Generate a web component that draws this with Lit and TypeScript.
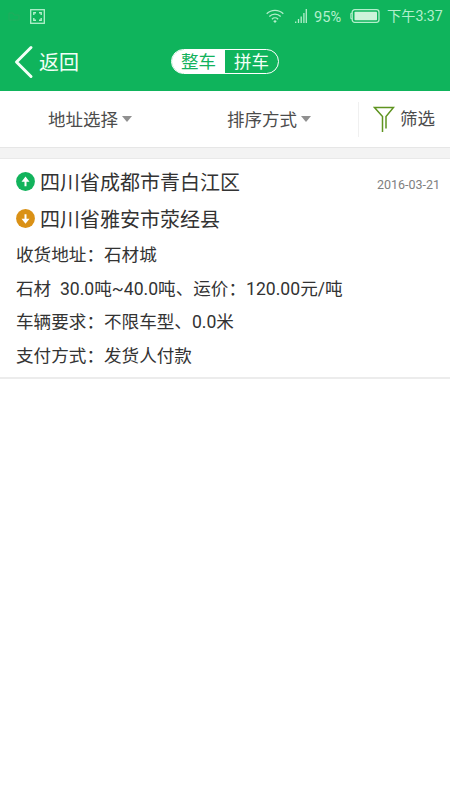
import { LitElement, html, svg, css } from "lit";
import { customElement, property } from "lit/decorators.js";

@customElement("status-bar")
class StatusBar extends LitElement {
  static styles = css`
    :host { display: flex; height: 32px; align-items: center; color: #b4efcc; font-size: 14.2px; line-height: 32px; }
    .faint { margin-left: 8px; }
    .frame { margin-left: 9px; }
    .wifi { margin-left: auto; }
    .signal { margin-left: 11px; }
    .percent { margin: 2px 0 0 7px; width: 28px; font-size: 14.6px; }
    .battery { margin-left: 8px; }
    .time { margin: 0 8px 0 7px; width: 55px; white-space: nowrap; text-align: right; }
    svg { display: block; flex: none; }
  `;
  render() {
    return html`
      <svg class="faint" width="13" height="12" viewBox="0 0 13 12"><path d="M1 3h4l1 2h5v5H1z" fill="none" stroke="#22ab5d" stroke-width="1"/></svg>
      <svg class="frame" width="15" height="15" viewBox="0 0 15 15" fill="none" stroke="currentColor">
        <rect x=".7" y=".7" width="13.6" height="13.6" stroke-width="1.3"/>
        <path d="M3.8 6V3.8H6M9 3.8h2.2V6M11.2 9v2.2H9M6 11.2H3.8V9" stroke-width="1.4"/>
      </svg>
      <svg class="wifi" width="18" height="15" viewBox="0 0 18 15" fill="none" stroke="currentColor" stroke-width="1.3">
        <path d="M.7 4.7a11.8 11.8 0 0 1 16.6 0M3.3 7.5a8 8 0 0 1 11.4 0M5.9 10.2a4.4 4.4 0 0 1 6.2 0"/>
        <path d="M7.3 12.2a2.4 2.4 0 0 1 3.4 0L9 14z" fill="currentColor" stroke="none"/>
      </svg>
      <svg class="signal" width="12" height="14" viewBox="0 0 12 14" fill="none" stroke="currentColor" stroke-width="1.3">
        <path d="M.7 12.5V14M3.5 10v4M6.2 7.5V14M8.9 4v10M11.3 0v14"/>
      </svg>
      <span class="percent">95%</span>
      <svg class="battery" width="30" height="14" viewBox="0 0 30 14">
        <path d="M2 4.3H.8v5.4H2" fill="none" stroke="currentColor"/>
        <rect x="2.2" y=".7" width="26.8" height="12.6" rx="2.5" fill="none" stroke="currentColor" stroke-width="1.3"/>
        <rect x="4.5" y="2.8" width="22.5" height="8.4" rx=".8" fill="#cdf3da"/>
      </svg>
      <span class="time">下午3:37</span>
    `;
  }
}

@customElement("title-bar")
class TitleBar extends LitElement {
  static styles = css`
    :host { display: grid; grid-template-columns: 171px 108px 1fr; height: 59px; align-items: center; color: #f2fff7; }
    .back { display: flex; align-items: center; padding-left: 14px; font-size: 20px; line-height: 28px; }
    .back svg { margin-right: 5px; }
    .back span { padding-top: 2px; }
    .switch { box-sizing: border-box; display: flex; width: 108px; height: 25px; border: 1px solid #fff; border-radius: 13px; overflow: hidden; font-size: 17.5px; line-height: 24px; }
    .option { flex: 1; text-align: center; }
    .option.on { background: #fff; color: #12b25c; }
  `;
  render() {
    return html`
      <div class="back">
        <svg width="20" height="34" viewBox="0 0 20 34"><path d="M17 2.5 2.5 17 17 31.5" fill="none" stroke="currentColor" stroke-width="3" stroke-linecap="round" stroke-linejoin="round"/></svg>
        <span>返回</span>
      </div>
      <div class="switch"><div class="option on">整车</div><div class="option">拼车</div></div>
    `;
  }
}

@customElement("filter-bar")
class FilterBar extends LitElement {
  static styles = css`
    :host { display: grid; grid-template-columns: 179px 179px 1fr; height: 56px; align-items: center; background: #fff; color: #4c4c4c; font-size: 17.5px; line-height: 26px; }
    .menu { display: flex; align-items: center; justify-content: center; gap: 4px; padding-left: 1px; }
    .menu span { padding-top: 1px; }
    .caret { border: 5px solid transparent; border-top: 6px solid #909090; border-bottom: 0; }
    .filter { display: flex; align-items: center; height: 35px; border-left: 1px solid #f0f0f0; padding-left: 14px; }
    .filter svg { margin-right: 5px; }
  `;
  render() {
    return html`
      <div class="menu"><span>地址选择</span><i class="caret"></i></div>
      <div class="menu"><span>排序方式</span><i class="caret"></i></div>
      <div class="filter">
        <svg width="22" height="27" viewBox="0 0 22 27" fill="none" stroke="#5f9420" stroke-width="1.5">
          <path d="M9.5 26V10.500L1.5 1.500h19L13 10.500v12"/>
        </svg>
        <span>筛选</span>
      </div>
    `;
  }
}

@customElement("place-row")
class PlaceRow extends LitElement {
  @property() kind = "from";
  @property() place = "";
  @property() date = "";
  static styles = css`
    :host { display: flex; align-items: center; height: 37px; font-size: 20px; }
    svg { display: block; margin-right: 5px; }
    .date { margin: 5px 10px 0 auto; font-size: 12.5px; color: #808080; }
  `;
  render() {
    const from = this.kind === "from";
    return html`
      <svg width="19" height="19" viewBox="0 0 19 19">
        <circle cx="9.5" cy="9.5" r="9.4" fill=${from ? "#12b35c" : "#da9116"}/>
        ${from
          ? svg`<path d="M9.5 4.600 13.5 9.700h-3v4.500h-2V9.700h-3z" fill="#fff"/>`
          : svg`<path d="M9.5 14.800 13.5 9.700h-3V5.200h-2v4.500h-3z" fill="#fff"/>`}
      </svg>
      <span>${this.place}</span>
      ${this.date ? html`<span class="date">${this.date}</span>` : null}
    `;
  }
}

@customElement("app-root")
class AppRoot extends LitElement {
  static styles = css`
    :host { display: block; width: 450px; height: 800px; overflow: hidden; background: #fff; font-family: Roboto, "Noto Sans CJK SC", sans-serif; }
    .top { background: #0fb45c; }
    .gap { box-sizing: border-box; height: 12px; background: #f3f3f3; border-top: 1px solid #e6e6e6; border-bottom: 1px solid #e9e9e9; }
    .card { box-sizing: border-box; height: 220px; padding: 4px 0 0 16px; border-bottom: 2px solid #ececec; color: #333; }
    .lines { padding-top: 2px; }
    .line { height: 33.5px; line-height: 33.5px; font-size: 17.6px; white-space: pre; }
  `;
  private lines = [
    "收货地址：石材城",
    "石材  30.0吨~40.0吨、运价：120.00元/吨",
    "车辆要求：不限车型、0.0米",
    "支付方式：发货人付款",
  ];
  render() {
    return html`
      <div class="top"><status-bar></status-bar><title-bar></title-bar></div>
      <filter-bar></filter-bar>
      <div class="gap"></div>
      <div class="card">
        <place-row kind="from" place="四川省成都市青白江区" date="2016-03-21"></place-row>
        <place-row kind="to" place="四川省雅安市荥经县"></place-row>
        <div class="lines">${this.lines.map((t) => html`<div class="line">${t}</div>`)}</div>
      </div>
    `;
  }
}
